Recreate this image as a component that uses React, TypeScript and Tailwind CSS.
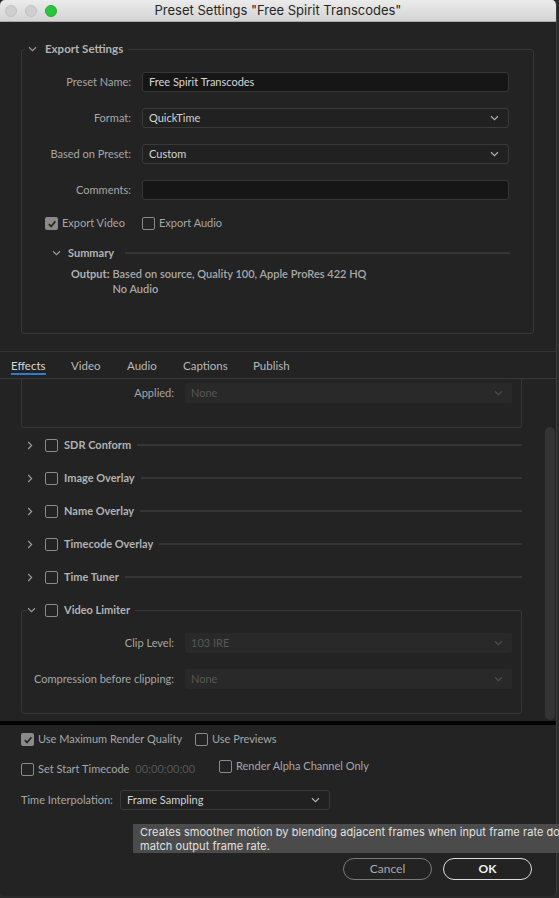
import React from "react";

const ChevRight = () => (
  <svg width="6" height="9" viewBox="0 0 6 9" className="shrink-0">
    <path d="M1.2 1l3.4 3.5L1.2 8" stroke="#9a9a9a" strokeWidth="1.2" fill="none" />
  </svg>
);

const ChevDown = ({ color = "#9a9a9a" }: { color?: string }) => (
  <svg width="9" height="6" viewBox="0 0 9 6" className="shrink-0">
    <path d="M1 1.2l3.5 3.4L8 1.2" stroke={color} strokeWidth="1.2" fill="none" />
  </svg>
);

const Box = ({ checked = false }: { checked?: boolean }) =>
  checked ? (
    <span className="w-[13px] h-[13px] rounded-[2px] bg-[#8a8a8a] flex items-center justify-center shrink-0">
      <svg width="10" height="10" viewBox="0 0 10 10">
        <path d="M1.8 5.2l2.3 2.3L8.4 2.3" stroke="#262626" strokeWidth="1.8" fill="none" />
      </svg>
    </span>
  ) : (
    <span className="block w-[13px] h-[13px] rounded-[2px] border-[1.5px] border-[#8a8a8a] shrink-0" />
  );

const Select = ({ text, w }: { text: string; w: string }) => (
  <div className={`${w} h-[20px] rounded-[3px] border border-[#3a3a3a] bg-[#212121] flex items-center pl-[6px] pr-[9px] text-[#d2d2d2]`}>
    <span className="flex-1">{text}</span>
    <ChevDown color="#b0b0b0" />
  </div>
);

const DisabledSelect = ({ text }: { text: string }) => (
  <div className="w-[327px] h-[20px] rounded-[2px] bg-[#292929] flex items-center pl-[6px] pr-[9px] text-[#575757]">
    <span className="flex-1">{text}</span>
    <ChevDown color="#4e4e4e" />
  </div>
);

const EffectRow = ({ label }: { label: string }) => (
  <div className="ml-[21px] w-[501px] h-[14px] flex items-center">
    <span className="ml-[6px] flex">
      <ChevRight />
    </span>
    <span className="ml-[12px] flex">
      <Box />
    </span>
    <span className="ml-[6px] font-bold text-[#b2b2b2] leading-[14px]">{label}</span>
    <span className="ml-[6px] flex-1 h-[2px] bg-[#353535]" />
  </div>
);

const Tab = ({ label, w, active = false }: { label: string; w: string; active?: boolean }) => (
  <div className={`${w} shrink-0 flex items-center pt-[2px]`}>
    <span className={`relative ${active ? "text-[#d8d8d8]" : "text-[#b8b8b8]"}`}>
      {label}
      {active && <span className="absolute left-0 right-0 top-[16px] h-[2px] bg-[#2f7bd0]" />}
    </span>
  </div>
);

export default function App() {
  return (
    <div
      className="relative w-[559px] h-[898px] bg-[#2a2a2a] text-[11px] overflow-hidden"
      style={{ fontFamily: "Lato, 'Open Sans', sans-serif" }}
    >
      <div className="w-[557px] h-[896px] bg-[#232323] rounded-[5px] overflow-hidden flex flex-col border-r border-[#3c3c3c]">
        {/* Title bar */}
        <div className="h-[22px] shrink-0 bg-gradient-to-b from-[#ebebeb] to-[#d4d4d4] border-b border-[#a9a9a9] flex items-center">
          <div className="w-[80px] flex items-center gap-[8px] pl-[5px]">
            <span className="w-[12px] h-[12px] rounded-full bg-[#cfcfcf] border border-[#c0c0c0]" />
            <span className="w-[12px] h-[12px] rounded-full bg-[#cfcfcf] border border-[#c0c0c0]" />
            <span className="w-[12px] h-[12px] rounded-full bg-[#2ac63f] border border-[#22a834]" />
          </div>
          <div
            className="flex-1 text-center text-[13px] text-[#262626]"
            style={{ fontFamily: "Inter, 'Liberation Sans', sans-serif" }}
          >
            Preset Settings "Free Spirit Transcodes"
          </div>
          <div className="w-[80px]" />
        </div>

        {/* Export settings */}
        <fieldset className="ml-[21px] mt-[20px] w-[513px] h-[292px] border border-[#363636] rounded-[3px] shrink-0">
          <legend className="ml-[3px]">
            <div className="h-[14px] flex items-center pl-[3px] pr-[5px]">
              <ChevDown />
              <span className="ml-[8px] font-bold text-[#b2b2b2] text-[11.5px] leading-[14px]">Export Settings</span>
            </div>
          </legend>
          <div className="mt-[16px] flex flex-col gap-[16px]">
            <div className="flex items-center h-[20px]">
              <span className="w-[109px] text-right text-[#a6a6a6]">Preset Name:</span>
              <div className="ml-[11px] w-[367px] h-[20px] rounded-[3px] border border-[#363636] bg-[#161616] flex items-center pl-[6px] text-[#d6d6d6]">
                Free Spirit Transcodes
              </div>
            </div>
            <div className="flex items-center h-[20px]">
              <span className="w-[109px] text-right text-[#a6a6a6]">Format:</span>
              <div className="ml-[11px]">
                <Select text="QuickTime" w="w-[367px]" />
              </div>
            </div>
            <div className="flex items-center h-[20px]">
              <span className="w-[109px] text-right text-[#a6a6a6]">Based on Preset:</span>
              <div className="ml-[11px]">
                <Select text="Custom" w="w-[367px]" />
              </div>
            </div>
            <div className="flex items-center h-[20px]">
              <span className="w-[109px] text-right text-[#a6a6a6]">Comments:</span>
              <div className="ml-[11px] w-[367px] h-[20px] rounded-[3px] border border-[#363636] bg-[#161616]" />
            </div>
          </div>
          <div className="mt-[17px] h-[13px] flex items-center pl-[23px]">
            <div className="w-[97px] flex items-center gap-[4px]">
              <Box checked />
              <span className="text-[#a6a6a6]">Export Video</span>
            </div>
            <div className="flex items-center gap-[4px]">
              <Box />
              <span className="text-[#a6a6a6]">Export Audio</span>
            </div>
          </div>
          <div className="mt-[16px] h-[14px] flex items-center pl-[30px] pr-[23px]">
            <ChevDown />
            <span className="ml-[7px] font-bold text-[#b2b2b2] leading-[14px]">Summary</span>
            <span className="ml-[11px] flex-1 h-[2px] bg-[#353535]" />
          </div>
          <div className="mt-[6px] flex pl-[49px] leading-[15px]">
            <span className="font-bold text-[#b2b2b2]">Output:</span>
            <div className="ml-[3px] flex flex-col font-semibold text-[#a8a8a8]">
              <span>Based on source, Quality 100, Apple ProRes 422 HQ</span>
              <span>No Audio</span>
            </div>
          </div>
        </fieldset>

        {/* Tabs */}
        <div className="mt-[17px] h-px bg-[#333333] shrink-0" />
        <div className="h-[27px] shrink-0 border-b border-[#383838] flex items-stretch pl-[11px] text-[11.5px]">
          <Tab label="Effects" w="w-[60px]" active />
          <Tab label="Video" w="w-[56px]" />
          <Tab label="Audio" w="w-[56px]" />
          <Tab label="Captions" w="w-[70px]" />
          <Tab label="Publish" w="w-[60px]" />
        </div>

        {/* Scroll region */}
        <div className="h-[342px] shrink-0 flex overflow-hidden">
          <div className="flex-1 flex flex-col">
            <div className="ml-[21px] w-[501px] h-[49px] shrink-0 border-x border-b border-[#363636] rounded-b-[3px] pt-[4px]">
              <div className="flex items-center h-[20px]">
                <span className="w-[152px] text-right text-[#a6a6a6]">Applied:</span>
                <div className="ml-[11px]">
                  <DisabledSelect text="None" />
                </div>
              </div>
            </div>
            <div className="mt-[10px] flex flex-col gap-[19px]">
              <EffectRow label="SDR Conform" />
              <EffectRow label="Image Overlay" />
              <EffectRow label="Name Overlay" />
              <EffectRow label="Timecode Overlay" />
              <EffectRow label="Time Tuner" />
              <fieldset className="ml-[21px] w-[501px] border border-[#363636] rounded-[3px] pb-[24px]">
                <legend className="ml-[5px]">
                  <div className="h-[14px] flex items-center pr-[5px]">
                    <ChevDown />
                    <span className="ml-[9px] flex">
                      <Box />
                    </span>
                    <span className="ml-[6px] font-bold text-[#b2b2b2] leading-[14px]">Video Limiter</span>
                  </div>
                </legend>
                <div className="mt-[16px] flex flex-col gap-[16px]">
                  <div className="flex items-center h-[20px]">
                    <span className="w-[152px] text-right text-[#a6a6a6]">Clip Level:</span>
                    <div className="ml-[11px]">
                      <DisabledSelect text="103 IRE" />
                    </div>
                  </div>
                  <div className="flex items-center h-[20px]">
                    <span className="w-[152px] text-right text-[#a6a6a6]">Compression before clipping:</span>
                    <div className="ml-[11px]">
                      <DisabledSelect text="None" />
                    </div>
                  </div>
                </div>
              </fieldset>
            </div>
          </div>
          <div className="w-[12px] shrink-0 pt-[48px] pr-[1px] flex justify-end">
            <div className="w-[10px] h-[293px] rounded-full bg-[#343434]" />
          </div>
        </div>

        <div className="h-[4px] bg-black shrink-0" />

        {/* Bottom section */}
        <div className="flex-1 flex flex-col pl-[21px] pt-[8px]">
          <div className="h-[13px] flex items-center">
            <div className="w-[174px] flex items-center gap-[4px]">
              <Box checked />
              <span className="text-[#a6a6a6]">Use Maximum Render Quality</span>
            </div>
            <div className="flex items-center gap-[4px]">
              <Box />
              <span className="text-[#a6a6a6]">Use Previews</span>
            </div>
          </div>
          <div className="mt-[14px] flex items-start">
            <div className="mt-[3px] h-[13px] w-[198px] flex items-center gap-[4px]">
              <Box />
              <span className="text-[#a6a6a6]">Set Start Timecode</span>
              <span className="ml-[2px] text-[#555555]">00;00;00;00</span>
            </div>
            <div className="h-[13px] flex items-center gap-[4px]">
              <Box />
              <span className="text-[#a6a6a6]">Render Alpha Channel Only</span>
            </div>
          </div>
          <div className="mt-[14px] h-[20px] flex items-center">
            <span className="w-[99px] text-[#a6a6a6]">Time Interpolation:</span>
            <Select text="Frame Sampling" w="w-[210px]" />
          </div>
          <div className="mt-[48px] flex justify-end pr-[24px] gap-[11px]">
            <div className="w-[89px] h-[22px] rounded-full border-[1.5px] border-[#7a7a7a] flex items-center justify-center text-[12px] text-[#a8a8a8]">
              Cancel
            </div>
            <div className="w-[89px] h-[22px] rounded-full border-[1.5px] border-[#dcdcdc] flex items-center justify-center text-[12px] font-bold text-[#f0f0f0]">
              OK
            </div>
          </div>
        </div>
      </div>

      {/* Tooltip */}
      <div
        className="absolute left-[133px] top-[824px] w-[440px] h-[29px] bg-[#4b4b4b] text-[#e2e2e2] text-[11px] tracking-[0.05px] leading-[14px] pl-[7px] pt-[1px] whitespace-nowrap"
        style={{ fontFamily: "Inter, 'Liberation Sans', sans-serif" }}
      >
        <div>Creates smoother motion by blending adjacent frames when input frame rate does not</div>
        <div>match output frame rate.</div>
      </div>
    </div>
  );
}
